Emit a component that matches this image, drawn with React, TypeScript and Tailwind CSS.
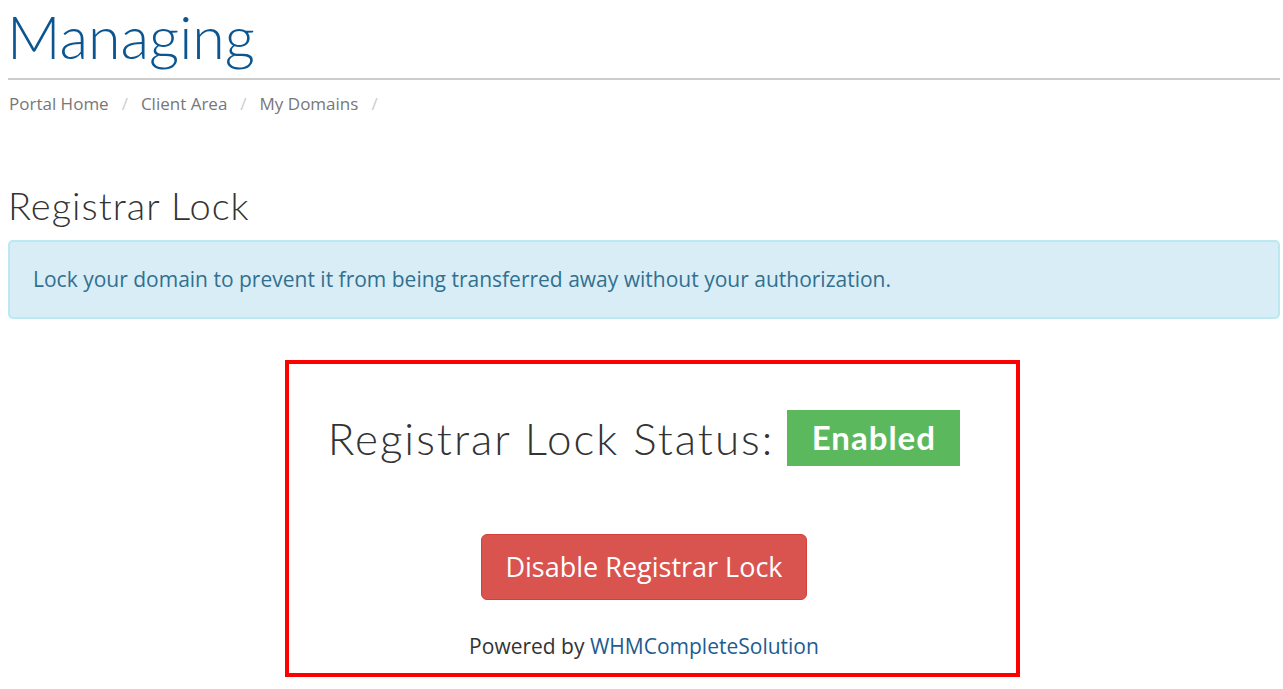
export default function App() {
  const heading = { fontFamily: "Lato, 'Open Sans', sans-serif" };
  const body = { fontFamily: "'Open Sans', 'Liberation Sans', sans-serif" };

  return (
    <div className="min-h-screen bg-white pl-2 pr-[3px]" style={body}>
      <div className="border-b-2 border-[#cccccc] pb-[4px]">
        <h1
          className="-ml-px text-[59px] font-light leading-[74px] text-[#0b5590]"
          style={heading}
        >
          Managing
        </h1>
      </div>

      <ol className="mt-[13px] flex items-center text-[17px] leading-[22px] text-[#777777]">
        <li className="pl-px">Portal Home</li>
        <li className="px-[13px] text-[#cccccc]">/</li>
        <li>Client Area</li>
        <li className="px-[13px] text-[#cccccc]">/</li>
        <li>My Domains</li>
        <li className="px-[13px] text-[#cccccc]">/</li>
      </ol>

      <h2
        className="mt-[67px] text-[38px] font-light leading-[46px] tracking-[1px] text-[#333333]"
        style={heading}
      >
        Registrar Lock
      </h2>

      <div className="mt-[12px] flex h-[79px] items-center rounded-[5px] border-2 border-[#bce8f1] bg-[#d9edf7] px-[23px] text-[21px] text-[#31708f]">
        Lock your domain to prevent it from being transferred away without your authorization.
      </div>

      <div className="ml-[277px] mt-[41px] flex h-[317px] w-[735px] flex-col items-center border-4 border-[#ff0000] pr-[17px]">
        <div className="mt-[46px] flex items-center gap-[14px]">
          <span
            className="text-[44px] font-light leading-[56px] tracking-[2px] text-[#333333]"
            style={heading}
          >
            Registrar Lock Status:
          </span>
          <span
            className="-ml-px flex h-[56px] w-[173px] items-center justify-center bg-[#5cb85c] text-[33px] font-bold tracking-[1px] text-white"
            style={heading}
          >
            Enabled
          </span>
        </div>

        <button className="mt-[68px] h-[66px] w-[326px] rounded-[6px] border border-[#d43f3a] bg-[#d9534f] text-[27px] text-white">
          Disable Registrar Lock
        </button>

        <p className="mt-[32px] text-[21px] leading-[28px] text-[#333333]">
          Powered by <span className="text-[#1d5c8f]">WHMCompleteSolution</span>
        </p>
      </div>
    </div>
  );
}
